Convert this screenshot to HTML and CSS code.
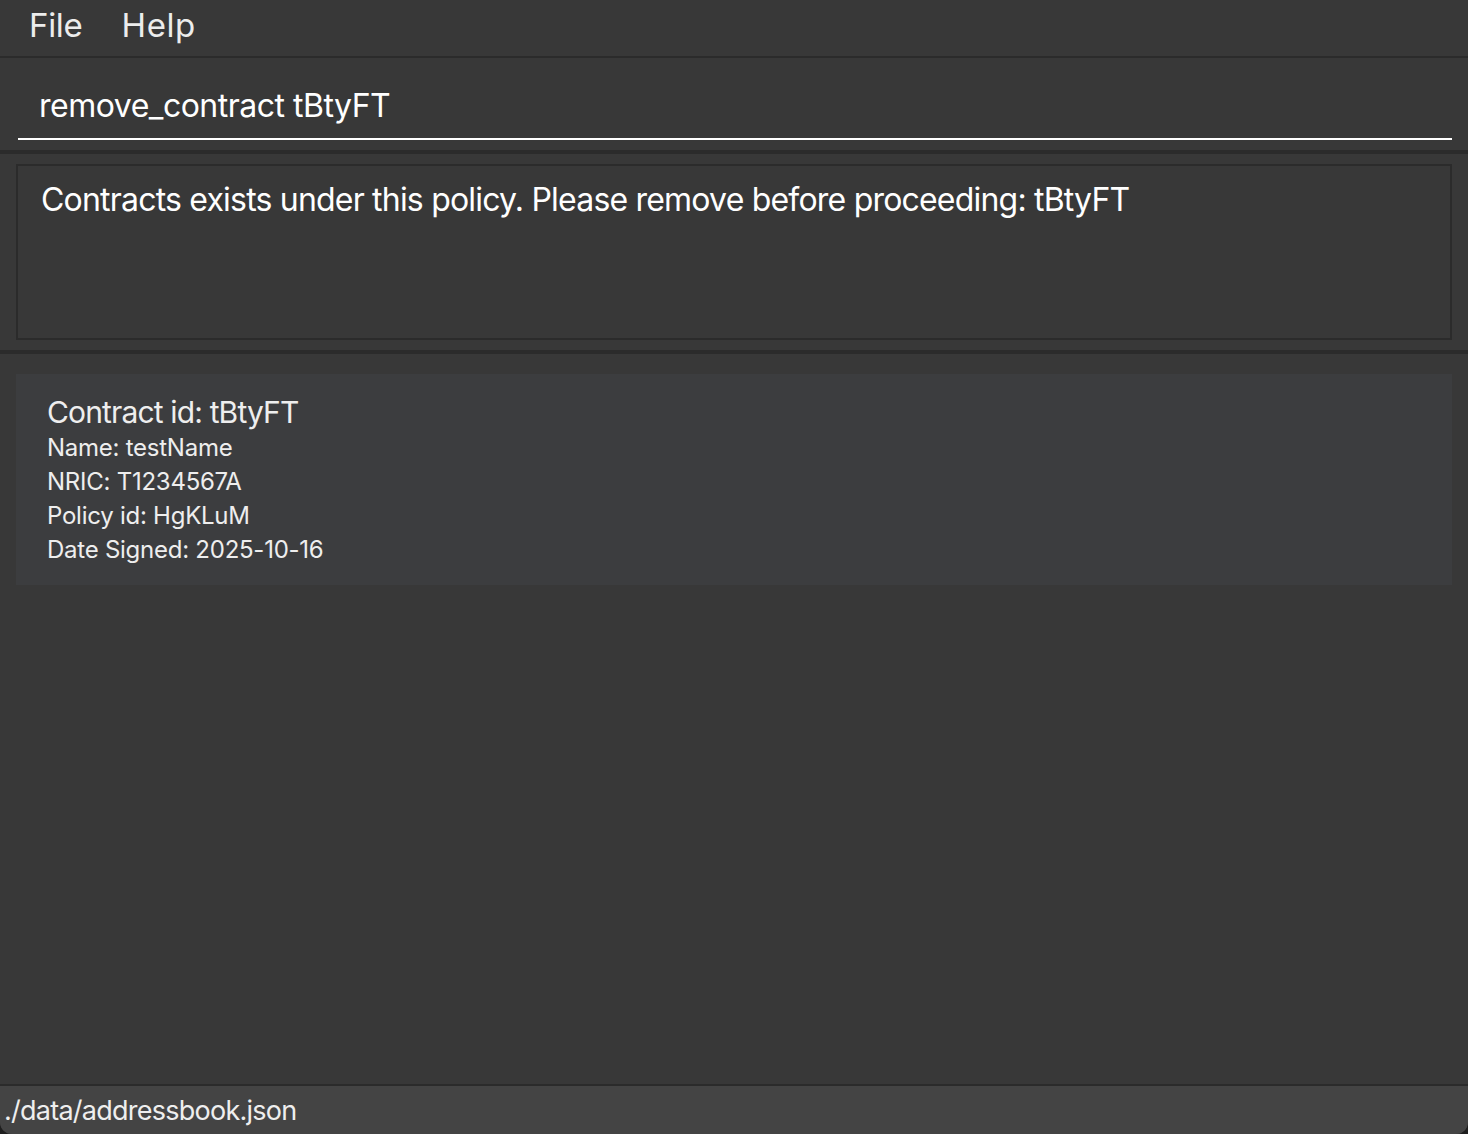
FILE: index.html
```html
<!DOCTYPE html>
<html lang="en">
<head>
<meta charset="utf-8">
<title>AddressBook</title>
<link rel="stylesheet" href="styles.css">
</head>
<body>
<div class="app">
  <nav class="menubar">
    <span class="menu-item">File</span>
    <span class="menu-item">Help</span>
  </nav>
  <div class="command-pane">
    <div class="command-field">remove_contract tBtyFT</div>
  </div>
  <div class="result-pane">
    <div class="result-box">Contracts exists under this policy. Please remove before proceeding: tBtyFT</div>
  </div>
  <div class="list-pane">
    <div class="card">
      <div class="card-title">Contract id: tBtyFT</div>
      <div class="card-line">Name: testName</div>
      <div class="card-line">NRIC: T1234567A</div>
      <div class="card-line">Policy id: HgKLuM</div>
      <div class="card-line">Date Signed: 2025-10-16</div>
    </div>
  </div>
  <footer class="statusbar">./data/addressbook.json</footer>
</div>
</body>
</html>
```
FILE: styles.css
```css
html, body {
  margin: 0;
  padding: 0;
  height: 100%;
  background: #1e1e1e;
}
body {
  font-family: Inter, "Noto Sans", sans-serif;
  color: #ffffff;
}
.app {
  height: 1134px;
  display: flex;
  flex-direction: column;
  background: #383838;
  border-bottom-left-radius: 12px;
  border-bottom-right-radius: 12px;
  overflow: hidden;
}
.menubar {
  height: 56px;
  flex: none;
  display: flex;
  align-items: center;
  gap: 39px;
  padding-left: 29px;
  border-bottom: 2px solid #2b2b2b;
  box-sizing: content-box;
}
.menu-item {
  font-size: 33px;
  color: #ececec;
  letter-spacing: -0.3px;
  position: relative;
  top: -3px;
}
.menu-item + .menu-item {
  letter-spacing: 0.6px;
}
.command-pane {
  height: 96px;
  flex: none;
  padding: 0 16px 0 18px;
  border-bottom: 4px solid #2b2b2b;
  display: flex;
  align-items: flex-end;
  box-sizing: border-box;
}
.command-field {
  flex: 1;
  font-size: 32px;
  letter-spacing: -0.5px;
  padding: 0 0 12px 21px;
  margin-bottom: 10px;
  border-bottom: 2px solid #ffffff;
  color: #ffffff;
  line-height: 40px;
}
.result-pane {
  height: 200px;
  flex: none;
  padding: 10px 16px;
  box-sizing: border-box;
  border-bottom: 4px solid #2b2b2b;
}
.result-box {
  height: 100%;
  box-sizing: border-box;
  border: 2px solid #2b2b2b;
  padding: 14px 23px;
  font-size: 32px;
  letter-spacing: -0.8px;
  line-height: 40px;
  color: #ffffff;
}
.list-pane {
  flex: 1;
  padding: 20px 16px;
}
.card {
  background: #3c3d3f;
  padding: 19px 31px 18px;
  color: #eeeeee;
}
.card-title {
  font-size: 30px;
  letter-spacing: -0.85px;
  line-height: 38px;
}
.card-line {
  font-size: 24px;
  letter-spacing: -0.25px;
  line-height: 34px;
}
.statusbar {
  height: 48px;
  flex: none;
  background: #444444;
  border-top: 2px solid #2b2b2b;
  font-size: 27px;
  letter-spacing: -0.75px;
  color: #eeeeee;
  padding-left: 4px;
  line-height: 50px;
}
```
